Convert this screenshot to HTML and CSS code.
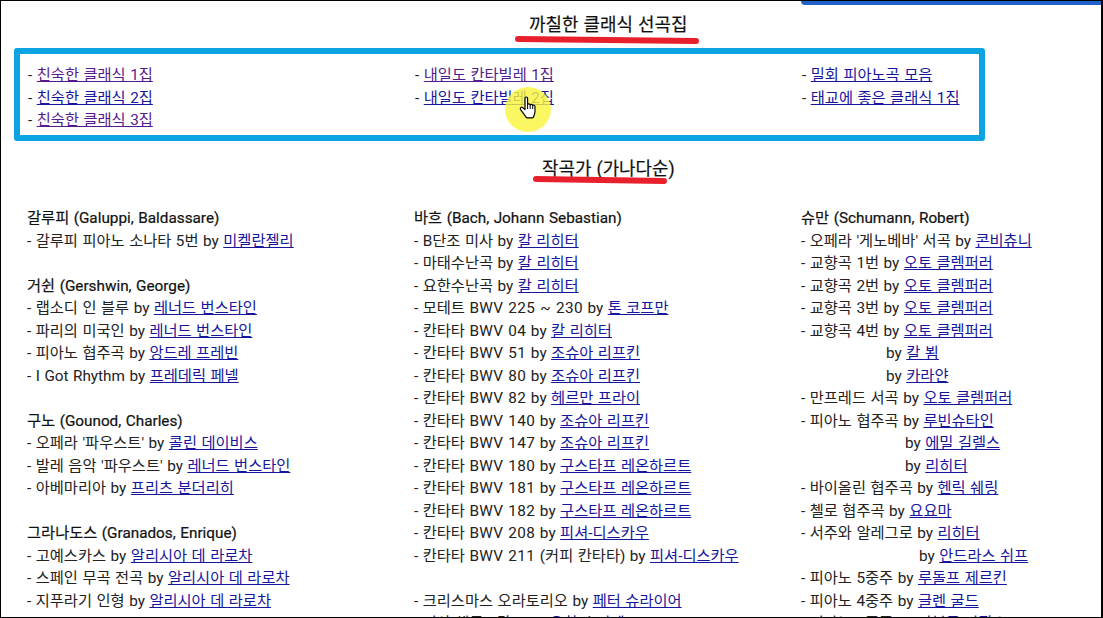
FILE: index.html
```html
<!DOCTYPE html>
<html lang="ko">
<head>
<meta charset="utf-8">
<title>까칠한 클래식 선곡집</title>
<link rel="stylesheet" href="styles.css">
</head>
<body>
<div class="frame">
  <div class="topbar"></div>
  <h2 class="title first">까칠한 클래식 선곡집<svg class="stroke s1" viewBox="0 0 184 8"><path d="M3 3 L181 5" /></svg></h2>
  <div class="box">
    <div class="col">
      <div class="row">- <a class="v" href="#">친숙한 클래식 1집</a></div>
      <div class="row">- <a href="#">친숙한 클래식 2집</a></div>
      <div class="row">- <a class="v" href="#">친숙한 클래식 3집</a></div>
    </div>
    <div class="col">
      <div class="row">- <a class="v" href="#">내일도 칸타빌레 1집</a></div>
      <div class="row">- <a href="#">내일도 칸타빌레 2집</a></div>
    </div>
    <div class="col">
      <div class="row">- <a href="#">밀회 피아노곡 모음</a></div>
      <div class="row">- <a href="#">태교에 좋은 클래식 1집</a></div>
    </div>
    <div class="halo"></div>
    <svg class="hand" viewBox="0 0 18 24"><path d="M6 2.2c0-1.6 2.6-1.6 2.6 0v6.300c.5-1 2.400-1 2.600.4.600-.9 2.300-.7 2.500.6.700-.6 2.200-.3 2.300 1v4.700c0 2.500-.7 3.600-1.300 5.300-.2.800-.8 1.300-1.500 1.300H8.500c-.7 0-1.200-.3-1.600-.9L1.600 13.600c-1-1.500.9-3.200 2.200-2L6 13.600z" fill="#fff" stroke="#000" stroke-width="1.200" stroke-linejoin="round"/><path d="M8.600 9v4M11.200 9v4M13.700 9.800V13" stroke="#000" stroke-width="1" fill="none"/></svg>
  </div>
  <h2 class="title second">작곡가 (가나다순)<svg class="stroke s2" viewBox="0 0 134 8"><path d="M3 3 L131 5" /></svg></h2>
  <div class="composers">
    <div class="col">
      <section class="group">
        <h3>갈루피 (Galuppi, Baldassare)</h3>
        <div class="row">- 갈루피 피아노 소나타 5번 by <a href="#">미켈란젤리</a></div>
      </section>
      <section class="group">
        <h3>거쉰 (Gershwin, George)</h3>
        <div class="row">- 랩소디 인 블루 by <a href="#">레너드 번스타인</a></div>
        <div class="row">- 파리의 미국인 by <a href="#">레너드 번스타인</a></div>
        <div class="row">- 피아노 협주곡 by <a href="#">앙드레 프레빈</a></div>
        <div class="row">- I Got Rhythm by <a href="#">프레데릭 페넬</a></div>
      </section>
      <section class="group">
        <h3>구노 (Gounod, Charles)</h3>
        <div class="row">- 오페라 '파우스트' by <a href="#">콜린 데이비스</a></div>
        <div class="row">- 발레 음악 '파우스트' by <a href="#">레너드 번스타인</a></div>
        <div class="row">- 아베마리아 by <a href="#">프리츠 분더리히</a></div>
      </section>
      <section class="group">
        <h3>그라나도스 (Granados, Enrique)</h3>
        <div class="row">- 고예스카스 by <a href="#">알리시아 데 라로차</a></div>
        <div class="row">- 스페인 무곡 전곡 by <a href="#">알리시아 데 라로차</a></div>
        <div class="row">- 지푸라기 인형 by <a href="#">알리시아 데 라로차</a></div>
      </section>
    </div>
    <div class="col">
      <section class="group">
        <h3>바흐 (Bach, Johann Sebastian)</h3>
        <div class="row">- B단조 미사 by <a href="#">칼 리히터</a></div>
        <div class="row">- 마태수난곡 by <a href="#">칼 리히터</a></div>
        <div class="row">- 요한수난곡 by <a href="#">칼 리히터</a></div>
        <div class="row">- 모테트 <span class="bwv">BWV 225 ~ 230</span> by <a href="#">톤 코프만</a></div>
        <div class="row">- 칸타타 <span class="bwv">BWV 04</span> by <a href="#">칼 리히터</a></div>
        <div class="row">- 칸타타 <span class="bwv">BWV 51</span> by <a href="#">조슈아 리프킨</a></div>
        <div class="row">- 칸타타 <span class="bwv">BWV 80</span> by <a href="#">조슈아 리프킨</a></div>
        <div class="row">- 칸타타 <span class="bwv">BWV 82</span> by <a href="#">헤르만 프라이</a></div>
        <div class="row">- 칸타타 <span class="bwv">BWV 140</span> by <a href="#">조슈아 리프킨</a></div>
        <div class="row">- 칸타타 <span class="bwv">BWV 147</span> by <a href="#">조슈아 리프킨</a></div>
        <div class="row">- 칸타타 <span class="bwv">BWV 180</span> by <a href="#">구스타프 레온하르트</a></div>
        <div class="row">- 칸타타 <span class="bwv">BWV 181</span> by <a href="#">구스타프 레온하르트</a></div>
        <div class="row">- 칸타타 <span class="bwv">BWV 182</span> by <a href="#">구스타프 레온하르트</a></div>
        <div class="row">- 칸타타 <span class="bwv">BWV 208</span> by <a href="#">피셔-디스카우</a></div>
        <div class="row">- 칸타타 <span class="bwv">BWV 211</span> (커피 칸타타) by <a href="#">피셔-디스카우</a></div>
      </section>
      <section class="group">
        <div class="row">- 크리스마스 오라토리오 by <a href="#">페터 슈라이어</a></div>
        <div class="row">- 미사 해투 - 칸토 by <a href="#">요한 슈미덴</a></div>
      </section>
    </div>
    <div class="col">
      <section class="group">
        <h3>슈만 (Schumann, Robert)</h3>
        <div class="row">- 오페라 '게노베바' 서곡 by <a href="#">콘비츄니</a></div>
        <div class="row">- 교향곡 1번 by <a href="#">오토 클렘퍼러</a></div>
        <div class="row">- 교향곡 2번 by <a href="#">오토 클렘퍼러</a></div>
        <div class="row">- 교향곡 3번 by <a href="#">오토 클렘퍼러</a></div>
        <div class="row">- 교향곡 4번 by <a href="#">오토 클렘퍼러</a></div>
        <div class="row indent i1">by <a href="#">칼 뵘</a></div>
        <div class="row indent i1">by <a href="#">카라얀</a></div>
        <div class="row">- 만프레드 서곡 by <a href="#">오토 클렘퍼러</a></div>
        <div class="row">- 피아노 협주곡 by <a href="#">루빈슈타인</a></div>
        <div class="row indent i2">by <a href="#">에밀 길렐스</a></div>
        <div class="row indent i2">by <a href="#">리히터</a></div>
        <div class="row">- 바이올린 협주곡 by <a href="#">헨릭 쉐링</a></div>
        <div class="row">- 첼로 협주곡 by <a href="#">요요마</a></div>
        <div class="row">- 서주와 알레그로 by <a href="#">리히터</a></div>
        <div class="row indent i3">by <a href="#">안드라스 쉬프</a></div>
        <div class="row">- 피아노 5중주 by <a href="#">루돌프 제르킨</a></div>
        <div class="row">- 피아노 4중주 by <a href="#">글렌 굴드</a></div>
        <div class="row">- 피아노 3중주 by <a href="#">파블로 카잘스</a></div>
      </section>
    </div>
  </div>
</div>
</body>
</html>
```
FILE: styles.css
```css
* { box-sizing: border-box; }
html, body { margin: 0; height: 618px; overflow: hidden; background: #fff; }
body { font-family: Roboto, "Noto Sans CJK KR", sans-serif; font-size: 15.300px; word-spacing: .7px; color: #222; }
.frame {
  position: relative;
  width: 1103px;
  height: 618px;
  overflow: hidden;
  border: 1px solid #000;
  border-right-width: 2px;
  padding: 0 13px;
}
.topbar {
  position: absolute;
  top: 0;
  left: 800px;
  right: 0;
  height: 4px;
  background: #2060c8;
  border-bottom-left-radius: 5px;
}
.title {
  position: relative;
  margin: 0;
  font-size: 17.900px;
  font-weight: 400;
  -webkit-text-stroke: .2px #111;
  color: #111;
  white-space: nowrap;
}
.first { height: 47px; padding: 12px 0 0 515px; line-height: 24px; }
.second { height: 66px; padding: 16px 0 0 528px; line-height: 24px; }
.stroke { position: absolute; overflow: visible; width: 184px; height: 8px; }
.stroke path { stroke: #e8202c; stroke-width: 6; stroke-linecap: round; fill: none; }
.s1 { left: 501px; top: 35px; }
.s2 { left: 519px; top: 35px; width: 134px; }
.box {
  position: relative;
  width: 971px;
  height: 93px;
  border: 6px solid #0ca3e2;
  border-radius: 3px;
  display: grid;
  grid-template-columns: 387px 387px 1fr;
  padding: 10px 8px 0;
}
.composers {
  display: grid;
  grid-template-columns: 387px 387px 1fr;
  padding: 0 13px;
}
.row { height: 22.500px; line-height: 22.500px; white-space: nowrap; }
.bwv { letter-spacing: .4px; }
a { color: #16169c; text-decoration: underline; }
a.v { color: #551a8b; }
h3 { margin: 0; height: 22.500px; line-height: 22.500px; font-size: 15.300px; font-weight: 400; -webkit-text-stroke: .2px #111; color: #111; }
.group { margin-bottom: 22.500px; }
.indent.i1 { padding-left: 85px; }
.indent.i2 { padding-left: 104px; }
.indent.i3 { padding-left: 118px; }
.halo {
  position: absolute;
  left: 485px;
  top: 33px;
  width: 46px;
  height: 45px;
  border-radius: 50%;
  background: rgba(250, 245, 60, .8);
}
.hand {
  position: absolute;
  left: 499px;
  top: 42px;
  width: 18px;
  height: 24px;
}
```
